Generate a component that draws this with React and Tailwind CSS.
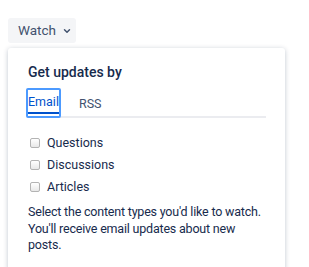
import { ChevronDown } from "lucide-react";

const ITEMS = ["Questions", "Discussions", "Articles"];

export default function App() {
  return (
    <div
      className="relative h-[267px] w-[309px] overflow-hidden bg-white text-[#172B4D]"
      style={{ fontFamily: 'Roboto, "Liberation Sans", Arial, sans-serif' }}
    >
      {/* text behind the popup */}
      <div className="absolute left-[28px] top-[262px] whitespace-nowrap text-[12.5px] text-[#172B4D]">
        community activity. Whether you're a newbie
      </div>

      <div className="relative pl-2 pt-[18px]">
        <button className="flex h-[25px] w-[68px] items-center gap-[6px] rounded-[3px] bg-[#F4F5F7] pl-[10px] text-[13.5px] text-[#42526E]">
          Watch
          <ChevronDown className="h-[10px] w-[10px]" strokeWidth={3.5} />
        </button>

        {/* popup */}
        <div className="mt-[5px] w-[277px] rounded-[3px] bg-white pb-[18px] pl-5 pr-[19px] pt-[15px] shadow-[0_1px_5px_rgba(9,30,66,0.25)]">
          <h2 className="text-[14px] font-medium leading-[18px]">
            Get updates by
          </h2>

          <div className="mt-[7px] flex items-end gap-[18px] border-b-2 border-[#EBECF0]">
            <div className="-mb-[2px] -ml-[2px] rounded-[2px] px-[2px] py-[4px] outline outline-2 -outline-offset-2 outline-[#4C9AFF]">
              <div className="border-b-2 border-[#0052CC] pb-[2px] pt-[2px] text-[12.5px] leading-[16px] text-[#0052CC]">
                Email
              </div>
            </div>
            <div className="pb-[4px] pt-[4px] text-[12.5px] leading-[16px] text-[#42526E]">
              RSS
            </div>
          </div>

          <div className="mt-[17px] flex flex-col gap-[6px] pl-[2px]">
            {ITEMS.map((it) => (
              <label key={it} className="flex h-[16px] items-center gap-[7px] text-[12.5px]">
                <span className="h-[10px] w-[10px] rounded-[2px] border border-[#B3B3B3] bg-gradient-to-b from-white to-[#E8E8E8]" />
                {it}
              </label>
            ))}
          </div>

          <p className="mt-[9px] whitespace-nowrap text-[12.5px] leading-[16.5px] tracking-[-0.2px]">
            Select the content types you'd like to watch.
            <br />
            You'll receive email updates about new
            <br />
            posts.
          </p>
        </div>
      </div>
    </div>
  );
}
